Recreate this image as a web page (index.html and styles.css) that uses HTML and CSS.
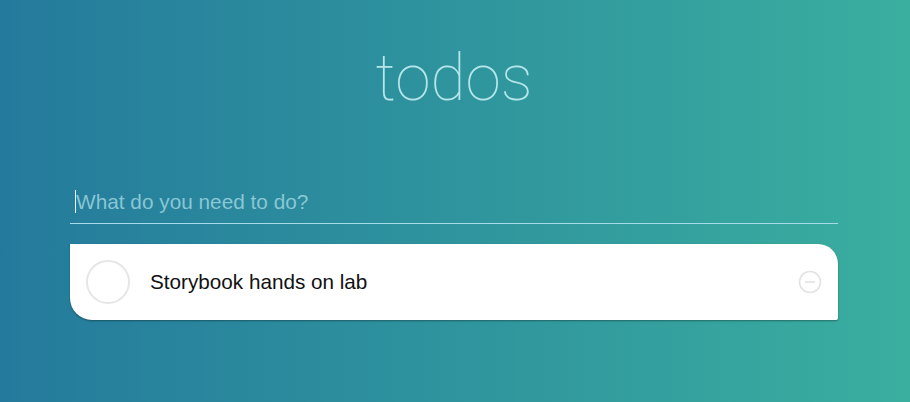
FILE: index.html
```html
<!DOCTYPE html>
<html lang="en">
<head>
<meta charset="utf-8">
<title>todos</title>
<link rel="stylesheet" href="styles.css">
</head>
<body>
<main class="app">
  <h1 class="title">todos</h1>
  <div class="new-todo">
    <span class="caret"></span>
    <span class="placeholder">What do you need to do?</span>
  </div>
  <ul class="list">
    <li class="item">
      <span class="check"></span>
      <span class="label">Storybook hands on lab</span>
      <svg class="remove" width="24" height="24" viewBox="0 0 24 24" aria-hidden="true">
        <circle cx="12" cy="12" r="10.5" fill="none" stroke="#e3e3e3" stroke-width="1.6"/>
        <line x1="7" y1="12" x2="17" y2="12" stroke="#e3e3e3" stroke-width="1.6"/>
      </svg>
    </li>
  </ul>
</main>
</body>
</html>
```
FILE: styles.css
```css
html, body {
  margin: 0;
  padding: 0;
  height: 100%;
}
body {
  background: linear-gradient(90deg, #247a9c 0%, #3aae9f 100%);
  font-family: "Liberation Sans", Arial, sans-serif;
  overflow: hidden;
  padding-right: 2px;
  box-sizing: border-box;
}
.app {
  width: 768px;
  margin: 0 auto;
  padding-top: 34px;
}
.title {
  margin: 0;
  text-align: center;
  font-family: Roboto, sans-serif;
  font-weight: 100;
  font-size: 64px;
  line-height: 90px;
  color: #b5e6ec;
}
.new-todo {
  margin-top: 56px;
  height: 44px;
  border-bottom: 1px solid #a6dcea;
  display: flex;
  align-items: center;
  padding-left: 5px;
  box-sizing: border-box;
}
.caret {
  width: 1px;
  height: 23px;
  background: #e8f6fa;
}
.placeholder {
  font-size: 20.8px;
  color: rgba(170, 222, 232, 0.75);
}
.list {
  list-style: none;
  margin: 20px 0 0;
  padding: 0;
}
.item {
  height: 76px;
  background: #fff;
  border-radius: 0 20px 2px 22px;
  box-shadow: 0 1px 2px rgba(0, 0, 0, 0.35);
  display: flex;
  align-items: center;
  padding: 0 16px 0 16px;
}
.check {
  width: 40px;
  height: 40px;
  border: 2px solid #e6e6e6;
  border-radius: 50%;
  flex: none;
}
.label {
  margin-left: 20px;
  font-size: 20.7px;
  color: #111;
  flex: 1;
}
.remove {
  flex: none;
}
```
